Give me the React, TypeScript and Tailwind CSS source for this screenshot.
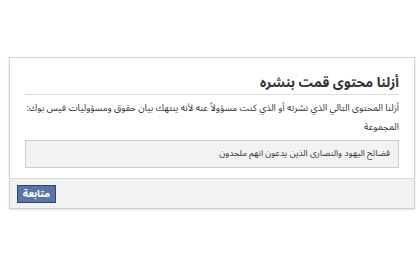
export default function App() {
  return (
    <div className="w-[420px] h-[280px] bg-white pt-[57px] px-[9px] font-['Noto_Sans_Arabic','DejaVu_Sans',sans-serif]">
      <div dir="rtl" className="w-[406px] border border-[#cfcfcf] shadow-[0_1px_2px_rgba(0,0,0,0.12)] bg-white">
        <div className="px-[15px] pt-[16px]">
          <div className="pb-[2px] border-b border-[#dcdcdc] text-[13.5px] font-bold text-[#333] leading-[18px]">أزلنا محتوى قمت بنشره</div>
          <div className="pt-[4px] text-[9.3px] leading-[19px] text-[#333] whitespace-nowrap">
            <div>أزلنا المحتوى التالي الذي نشرته أو الذي كنت مسؤولاً عنه لأنه ينتهك بيان حقوق ومسؤوليات فيس بوك:</div>
            <div>المجموعة</div>
          </div>
          <div className="mt-[3px] mb-[10px] h-[28px] flex items-center px-[8px] bg-[#f2f2f2] border border-[#cccccc] text-[8.8px] text-[#333]">
            فضائح اليهود والنصارى الذين يدعون انهم ملحدون
          </div>
        </div>
        <div className="h-[30px] bg-[#f2f2f2] border-t border-[#d6d6d6] flex items-center px-[7px] justify-end">
          <div className="w-[39px] h-[18px] bg-[#5b74a8] border border-[#29447e] text-white text-[10px] font-bold flex items-center justify-center">متابعة</div>
        </div>
      </div>
    </div>
  );
}
